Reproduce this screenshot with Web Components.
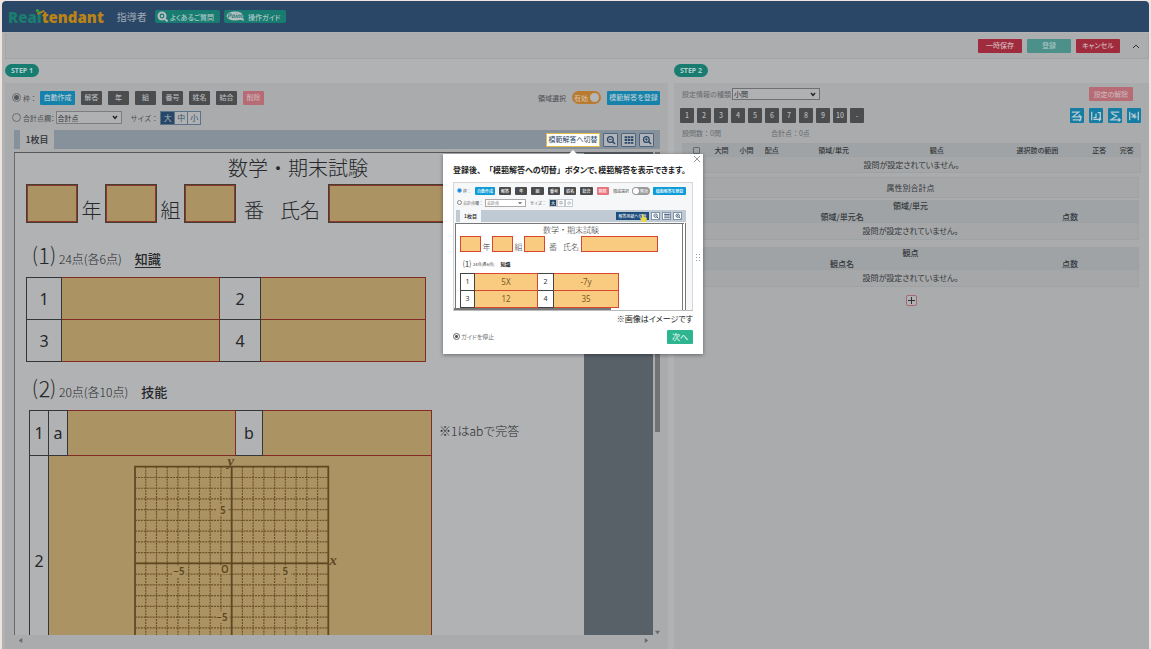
<!DOCTYPE html>
<html lang="ja">
<head>
<meta charset="utf-8">
<title>Realtendant 指導者</title>
<style>
html,body{margin:0;height:100%}
body{background:#efe3df;font-family:"Noto Sans CJK JP","Noto Sans",sans-serif;color:#2d3135;overflow:hidden}
</style>
</head>
<body>
<real-app></real-app>
<script>
const BASE = `
*{box-sizing:border-box}
button,input,select{font:inherit;color:inherit;margin:0}
button{cursor:pointer;padding:0;border:0;white-space:nowrap}
select{appearance:none;background:#b0b1b3 url("data:image/svg+xml,%3Csvg xmlns='http://www.w3.org/2000/svg' viewBox='0 0 6 5'%3E%3Cpath d='M1 1l2 2.500 2-2.500' fill='none' stroke='%23222' stroke-width='1.400'/%3E%3C/svg%3E") no-repeat right 3px center/6px 5px}
`;
function define(name, css, html) {
  const t = document.createElement('template');
  t.innerHTML = `<style>${BASE}${css}</style>${html}`;
  customElements.define(name, class extends HTMLElement {
    constructor() {
      super();
      this.attachShadow({mode: 'open'}).append(t.content.cloneNode(true));
    }
  });
}

/* Flat coloured button; the tone attribute selects its colour */
define('flat-button', `
:host{display:block;width:21px;height:14px;font-size:7px;--bg:#4b4c4e;--fg:#b6b7b9}
:host([tone=blue]){--bg:#1582ab;--fg:#b4c9d2}
:host([tone=pink]){--bg:#b66b75;--fg:#cdb1b5}
:host([tone=red]){--bg:#a02b3c;--fg:#d0b6ba}
:host([tone=teal]){--bg:#4b9089;--fg:#a8c4c1}
:host([size=mini]){width:13px;height:8px;font-size:4px;--bg:#4b4c4e;--fg:#fff}
:host([size=mini][tone=blue]){--bg:#0d9bd8}
:host([size=mini][tone=pink]){--bg:#e8737f}
button{display:block;width:100%;height:100%;border-radius:1px;background:var(--bg);color:var(--fg);font-weight:500;line-height:1;font-feature-settings:"palt"}
`, `<button type="button"><slot></slot></button>`);

const LENS = s => `<svg viewBox="0 0 16 16" aria-hidden="true"><circle cx="7" cy="7" r="4.6" fill="none" stroke="currentColor" stroke-width="2"/><path d="M10.4 10.4L14.5 14.5" stroke="currentColor" stroke-width="2.4"/><path d="${s}" stroke="currentColor" stroke-width="1.4"/></svg>`;
const GRID = `<svg viewBox="0 0 16 16" aria-hidden="true"><path fill="currentColor" d="M1 2h4v3H1zM6 2h4v3H6zM11 2h4v3h-4zM1 6.500h4v3H1zM6 6.500h4v3H6zM11 6.500h4v3h-4zM1 11h4v3H1zM6 11h4v3H6zM11 11h4v3h-4z"/></svg>`;
const ICONS = `
<button class="ic" type="button" aria-label="縮小">${LENS('M4.800 7h4.400')}</button>
<button class="ic" type="button" aria-label="一覧">${GRID}</button>
<button class="ic" type="button" aria-label="拡大">${LENS('M4.800 7h4.400M7 4.800v4.400')}</button>`;

define('app-header', `
:host{display:flex;align-items:center;height:31px;padding:0 6px;background:#2a4767;border-radius:4px 4px 0 0}
.logo{position:relative;font:800 15px/20px "Open Sans","Noto Sans",sans-serif;color:#1b7d70;text-decoration:none}
.logo b{font-weight:800;color:#b98317}
.logo svg{position:absolute;left:26px;top:1px;width:12px;height:7px}
.role{margin:0 8px 0 13px;font-size:10px;color:#a4adb6}
.help{display:flex;align-items:center;gap:2px;height:13px;margin-right:4px;padding:0 6px 0 2px;border-radius:2px;background:#187c71;color:#aac8c5;font-size:7px;font-weight:500;text-decoration:none;font-feature-settings:"palt"}
.help svg{height:11px}
`, `
<a class="logo" href="#home">Real<b>tendant</b><svg viewBox="0 0 14 8" aria-hidden="true"><circle cx="4" cy="3" r="2" fill="#3f9a3c"/><path d="M4 7L12 3" stroke="#b98317" stroke-width="2"/></svg></a>
<span class="role">指導者</span>
<a class="help" href="#faq"><svg viewBox="0 0 11 11" aria-hidden="true"><circle cx="5" cy="5" r="4.500" fill="#b4bcc0"/><path d="M8 8l2.500 2.500" stroke="#b4bcc0" stroke-width="2"/><circle cx="5" cy="5" r="1.800" fill="none" stroke="#187c71" stroke-width="1.200"/></svg>よくあるご質問</a>
<a class="help" href="#guide"><svg viewBox="0 0 20 11" aria-hidden="true"><ellipse cx="9" cy="5" rx="8.500" ry="4.500" fill="#b4bcc0"/><path d="M12 8l6 2-1-4z" fill="#b4bcc0"/><text x="9" y="7" text-anchor="middle" font-size="6" font-style="italic" font-weight="700" fill="#187c71">Point</text></svg>操作ガイド</a>`);

define('action-bar', `
:host{display:flex;align-items:center;justify-content:flex-end;gap:5px;height:26px;margin:1px 0 0 3px;padding:0 6px;background:#acadaf;border:1px solid #a2a4a6;border-top:0}
flat-button{width:44px;font-size:7px}
.fold{width:12px;height:12px;margin-left:5px;background:none}
.fold svg{display:block;width:8px;margin:auto}
`, `
<flat-button tone="red">一時保存</flat-button>
<flat-button tone="teal">登録</flat-button>
<flat-button tone="red">キャンセル</flat-button>
<button class="fold" type="button" aria-label="閉じる"><svg viewBox="0 0 8 6"><path d="M1 5l3-3 3 3" fill="none" stroke="#2d3135"/></svg></button>`);

/* One of the two numbered work areas */
define('step-panel', `
:host{display:flex;flex-direction:column;min-width:0;min-height:0}
.badge{align-self:flex-start;margin:5px 0 6px;padding:0 6px;border-radius:7px;background:#187c71;color:#b3cfcb;font:700 7px/13px "Noto Sans",sans-serif}
.body{flex:1;min-height:0;display:flex;flex-direction:column;background:#aaabad}
`, `<div class="badge"><slot name="badge"></slot></div><div class="body"><slot></slot></div>`);

define('answer-tools', `
:host{display:block;padding:7px 8px 0 7px;font-size:7px;color:#4a4d50}
.row{display:flex;align-items:center;height:15px}
.row+.row{margin-top:5px}
label{display:flex;align-items:center;gap:2px;white-space:nowrap}
input[type=radio]{appearance:none;width:9px;height:9px;border:1px solid #6b6d70;border-radius:50%}
input[type=radio]:checked{background:radial-gradient(circle,#55585b 0 2px,transparent 3px)}
.set{display:flex;gap:6px;margin-left:3px}
.end{display:flex;align-items:center;gap:6px;margin-left:auto}
.wide{width:35px}.reg{width:53px}
.toggle{display:flex;align-items:center;justify-content:space-between;width:29px;height:13px;padding:0 2px;border-radius:7px;background:#b87b2f;color:#d3bea2;font-weight:500}
.toggle input{appearance:none;width:9px;height:9px;border-radius:50%;background:#b5b6b8}
.sum{font-feature-settings:"palt"}
select{width:66px;height:13px;margin-left:1px;padding:0 1px;border:1px solid #7b7d80;border-radius:0;color:#303336}
.size{margin:0 2px 0 9px}
.seg{display:flex;height:14px;border:1px solid #5c7288}
.seg button{width:13px;background:#b0b1b3;color:#3d536b;border-left:1px solid #5c7288;font-size:8px;line-height:1}
.seg button:first-child{background:#284766;color:#aab5c0;border-left:0}
`, `
<div class="row">
<label><input type="radio" name="kind" checked>枠：</label>
<div class="set"><flat-button class="wide" tone="blue">自動作成</flat-button><flat-button>解答</flat-button><flat-button>年</flat-button><flat-button>組</flat-button><flat-button>番号</flat-button><flat-button>姓名</flat-button><flat-button>結合</flat-button><flat-button tone="pink">削除</flat-button></div>
<div class="end"><span>領域選択</span><label class="toggle">有効<input type="checkbox" checked></label><flat-button class="reg" tone="blue">模範解答を登録</flat-button></div>
</div>
<div class="row">
<label class="sum"><input type="radio" name="kind">合計点欄：</label>
<select aria-label="合計点欄"><option>合計点</option></select>
<span class="size">サイズ：</span>
<div class="seg"><button type="button">大</button><button type="button">中</button><button type="button">小</button></div>
</div>`);

define('sheet-tabs', `
:host{display:flex;align-items:center;height:19px;margin:5px 8px 0 9px;padding:0 6px;background:#87919b;font-size:7px}
.tab{align-self:stretch;width:34px;background:#acadaf;color:#2d3135;font-size:9px;font-weight:500}
.tools{display:flex;gap:3px;margin-left:auto}
.anchor{position:relative}
.switch{width:54px;height:14px;border:1px solid #e0bd4c;background:#fff;color:#2a4767;line-height:1;font-feature-settings:"palt"}
guide-popover{position:absolute;z-index:5;top:21px;left:50%;transform:translateX(-50%)}
.ic{width:15px;height:14px;border:1px solid #4c647d;border-radius:1px;background:#b0b3b7;color:#2a4767}
.ic svg{display:block;width:10px;height:10px;margin:auto}
`, `
<button class="tab" type="button">1枚目</button>
<div class="tools"><div class="anchor"><button class="switch" type="button">模範解答へ切替</button><guide-popover></guide-popover></div>${ICONS}</div>`);

const gridLines = (() => {
  let d = '';
  for (let i = 1; i < 18; i++) d += `M${i * 11} 0V198M0 ${i * 11}H198`;
  return d;
})();

/* The scanned exam page with its answer frames */
define('exam-sheet', `
:host{display:block;width:570px;flex:none;padding:0 0 0 11px;background:#b1b2b4;border-left:1px solid #66686b;color:#26282a;font-weight:300}
h1{margin:0 0 0 -14px;padding-top:1px;text-align:center;font-size:20px;line-height:27px;font-weight:300}
.frame{width:52px;height:39px;background:#ac9364;border:1px solid #443d38;outline:1px solid #8d3a2b;outline-offset:-2px}
.name{display:flex;align-items:flex-end;margin-top:3px;font-size:20px;line-height:27px}
.name span{width:27px;text-align:center;white-space:nowrap}
.name .no{width:36px}
.name .nm{width:56px}
.frame.long{width:193px}
h2{display:flex;align-items:baseline;margin:0;height:54px;padding-left:8px;font-weight:300;font-size:12px;line-height:62px}
h2.second{height:48px;line-height:50px}
h2 i{font-style:normal;font-size:22px;width:26px;margin-left:-1px}
h2 b{font-weight:500;font-size:13px;margin-left:13px}
h2 u{text-underline-offset:3px}
table{border-collapse:collapse;table-layout:fixed;font:400 16px/20px "Noto Sans",sans-serif}
th,td{padding:0;border:1px solid #34373a;text-align:center;font-weight:400}
td{background:#ac9364;border:1px solid #822b25}
tr.h42{height:42px}tr.h45{height:45px}tr.h210{height:210px}
.two{display:flex;align-items:flex-start;margin-left:3px}
.two p{margin:11px 0 0 7px;font-size:12px;line-height:20px}
td.plot{vertical-align:top}
svg{display:block;width:218px;height:206px;margin:0 0 0 86px;overflow:visible}
`, `
<h1>数学・期末試験</h1>
<div class="name"><div class="frame"></div><span>年</span><div class="frame"></div><span>組</span><div class="frame"></div><span class="no">番</span><span class="nm">氏名</span><div class="frame long"></div></div>
<h2><i>⑴</i>24点(各6点)<b><u>知識</u></b></h2>
<table><colgroup><col style="width:35px"><col style="width:158px"><col style="width:41px"><col style="width:165px"></colgroup>
<tr class="h42"><th>1</th><td></td><th>2</th><td></td></tr>
<tr class="h42"><th>3</th><td></td><th>4</th><td></td></tr></table>
<h2 class="second"><i>⑵</i>20点(各10点)<b>技能</b></h2>
<div class="two">
<table><colgroup><col style="width:19px"><col style="width:19px"><col style="width:168px"><col style="width:27px"><col style="width:169px"></colgroup>
<tr class="h45"><th>1</th><th>a</th><td></td><th>b</th><td></td></tr>
<tr class="h210"><th>2</th><td class="plot" colspan="4">
<svg viewBox="0 -11 223 211" font-family="Noto Sans" fill="#5f4820" preserveAspectRatio="xMinYMin meet">
<path d="${gridLines}" stroke="#6a5025" stroke-width="1.200" stroke-dasharray="2 1" fill="none"/>
<path d="M0 0H198V198H0ZM99 0V198M0 99H198" stroke="#5f4820" stroke-width="1.800" fill="none"/>
<g fill="#ac9364"><rect x="84" y="38" width="11" height="12"/><rect x="86" y="101" width="11" height="9"/><rect x="38" y="102" width="14" height="11"/><rect x="149" y="102" width="11" height="11"/><rect x="84" y="148" width="13" height="12"/></g>
<text x="98" y="-1" text-anchor="middle" font-size="15" font-weight="700" font-style="italic" font-family="Liberation Serif">y</text>
<text x="203" y="101" text-anchor="middle" font-size="15" font-weight="700" font-style="italic" font-family="Liberation Serif">x</text>
<g font-size="10" font-weight="600" text-anchor="middle"><text x="90" y="48">5</text><text x="92" y="109">O</text><text x="45" y="111">−5</text><text x="154" y="111">5</text><text x="89" y="158">−5</text></g>
</svg></td></tr></table>
<p>※1はabで完答</p></div>`);

define('sheet-viewer', `
:host{flex:1;min-height:0;display:grid;grid-template:minmax(0,1fr) 10px / minmax(0,1fr) 8px;margin:3px 7px 4px 9px}
.view{display:flex;overflow:hidden;background:#586068;border-top:1px solid #55575a}
.v{display:flex;flex-direction:column;justify-content:space-between;align-items:center}
.v i{width:5px;height:280px;background:#727375}
.h{display:flex;justify-content:space-between;align-items:center;padding:0 4px}
svg{width:5px;height:5px;fill:#66686b}
`, `
<div class="view"><exam-sheet></exam-sheet></div>
<div class="v"><i></i><svg viewBox="0 0 6 6"><path d="M0 1h6L3 5z"/></svg></div>
<div class="h"><svg viewBox="0 0 6 6"><path d="M5 0v6L1 3z"/></svg><svg viewBox="0 0 6 6"><path d="M1 0v6l4-3z"/></svg></div>`);

/* Small picture of the editor shown inside the guide */
define('guide-preview', `
:host{display:block;height:129px;overflow:hidden;border:1px solid #d4d6d9;border-bottom-color:#bbb;background:#f6f7f8;font-size:4px;line-height:8px;color:#555;position:relative;font-feature-settings:normal}
.row{display:flex;align-items:center;gap:4px;height:8px;margin:4px 6px 0 3px;white-space:nowrap}
.row.b{gap:2px}
label{display:flex;align-items:center;gap:1px}
input[type=radio]{appearance:none;width:5px;height:5px;border:1px solid #888;border-radius:50%}
input[type=radio]:checked{background:#0d86e0;border-color:#7fbdf0}
.wide{width:21px}.reg{width:33px}
.end{display:flex;align-items:center;gap:3px;margin-left:auto}
.toggle{width:18px;height:8px;padding:0 1px;border-radius:4px;background:#9a9a9a;color:#fff}
.toggle input{appearance:none;width:6px;height:6px;border-radius:50%;background:#fff}
select{width:41px;height:8px;padding:0 1px;border:1px solid #aaa;border-radius:0;background-color:#fff;background-size:4px 4px;font-size:4px;line-height:6px}
.size{margin:0 1px 0 2px}
.seg{display:flex}
.seg button{width:8px;height:8px;border:1px solid #c3cad2;background:#fff;line-height:1}
.seg button:first-child{background:#284766;color:#fff}
.tabs{display:flex;align-items:center;gap:2px;height:12px;margin:3px 6px 0 2px;padding:0 4px;background:#c0cad5}
.tab{align-self:stretch;width:21px;background:#f6f7f8;color:#222;font-size:5px;font-weight:500}
.switch{position:relative;width:33px;height:8px;margin-left:auto;background:#1d4c7c;color:#fff;line-height:1}
.switch svg{position:absolute;right:2px;top:2px;width:7px;height:8px}
.ic{width:9px;height:8px;border:1px solid #8195aa;background:#fff;color:#2a4767}
.ic svg{display:block;width:6px;height:6px;margin:auto}
.paper{height:88px;margin:1px 6px 0 1px;padding-left:4px;background:#fff;border:1px solid #777;border-right:4px double #777;color:#333}
.t{text-align:center;font-size:8px;line-height:12px;font-weight:300}
.name{display:flex;align-items:flex-end;font-size:8px;line-height:11px;font-weight:300}
.name i{width:21px;height:16px;background:#f9cb80;border:1px solid #d8472f}
.name i.long{width:77px}
.name span{width:11px;text-align:center;white-space:nowrap}
.name .no{width:16px}.name .nm{width:20px}
.q{display:flex;align-items:center;gap:2px;height:21px;padding:3px 0 0 3px}
.q span{font-size:8px}.q b{margin-left:4px;font-size:5px;color:#222}
table{border-collapse:collapse;table-layout:fixed;font:400 8px/10px "Noto Sans",sans-serif}
tr{height:17px}
th,td{padding:0;border:1px solid #444;text-align:center;font-weight:400}
th{font-size:7px}
td{background:#f9cb80;border-color:#d8472f;color:#7a5a25}
.bar{position:absolute;left:0;bottom:0;width:157px;height:2px;background:#777}
`, `
<div class="row"><label><input type="radio" name="k" checked>枠：</label>
<flat-button size="mini" class="wide" tone="blue">自動作成</flat-button><flat-button size="mini">解答</flat-button><flat-button size="mini">年</flat-button><flat-button size="mini">組</flat-button><flat-button size="mini">番号</flat-button><flat-button size="mini">姓名</flat-button><flat-button size="mini">結合</flat-button><flat-button size="mini" tone="pink">削除</flat-button>
<div class="end"><span>領域選択</span><label class="toggle"><input type="checkbox">無効</label><flat-button size="mini" class="reg" tone="blue">模範解答を登録</flat-button></div></div>
<div class="row b"><label><input type="radio" name="k">合計点欄：</label><select aria-label="合計点欄"><option>合計点</option></select><span class="size">サイズ：</span><div class="seg"><button type="button">大</button><button type="button">中</button><button type="button">小</button></div></div>
<div class="tabs"><button class="tab" type="button">1枚目</button><button class="switch" type="button">解答用紙へ切替<svg viewBox="0 0 7 8" aria-hidden="true"><path d="M2 8L0 4l2 0V0h1l1 3 3 1-1 4z" fill="#e8d84a"/></svg></button>${ICONS}</div>
<div class="paper"><div class="t">数学・期末試験</div>
<div class="name"><i></i><span>年</span><i></i><span>組</span><i></i><span class="no">番</span><span class="nm">氏名</span><i class="long"></i></div>
<div class="q"><span>⑴</span>24点(各6点)<b>知識</b></div>
<table><colgroup><col style="width:14px"><col style="width:63px"><col style="width:16px"><col style="width:65px"></colgroup>
<tr><th>1</th><td>5X</td><th>2</th><td>-7y</td></tr><tr><th>3</th><td>12</td><th>4</th><td>35</td></tr></table></div>
<div class="bar"></div>`);

define('guide-popover', `
:host{display:block;width:260px;padding:9px 10px 10px;background:#fff;box-shadow:0 1px 4px #0006;color:#222;font-feature-settings:"palt"}
:host::before{content:"";position:absolute;top:-4px;left:50%;margin-left:-4px;border:4px solid transparent;border-top:0;border-bottom-color:#fff}
h3{margin:0 0 5px;font-size:8px;line-height:14px;font-weight:700;white-space:nowrap}
h3 span{font-feature-settings:normal}
p{margin:1px 0 4px;text-align:right;font-size:8px;line-height:14px}
.foot{display:flex;align-items:center;justify-content:space-between;height:14px}
label{display:flex;align-items:center;gap:1px;font-size:6px;color:#777}
input{appearance:none;width:7px;height:7px;border:1px solid #666;border-radius:50%;background:radial-gradient(circle,#555 0 1px,transparent 2px)}
.next{width:26px;height:14px;border-radius:1px;background:#2fb690;color:#fff;font-size:8px;line-height:1}
.x{position:absolute;top:1px;right:2px;width:8px;height:8px;background:none}
.x svg,.grip{display:block}
.grip{position:absolute;right:3px;top:100px;width:4px;height:8px}
`, `
<button class="x" type="button" aria-label="閉じる"><svg viewBox="0 0 8 8"><path d="M1 1l6 6M7 1L1 7" stroke="#999"/></svg></button>
<h3>登録後<span>、「</span>模範解答への切替<span>」</span>ボタンで、模範解答を表示できます。</h3>
<guide-preview></guide-preview>
<p>※画像はイメージです</p>
<div class="foot"><label><input type="radio">ガイドを停止</label><button class="next" type="button">次へ</button></div>
<svg class="grip" viewBox="0 0 4 8"><path d="M0 0h1v1H0zM3 0h1v1H3zM0 3h1v1H0zM3 3h1v1H3zM0 6h1v1H0zM3 6h1v1H3z" fill="#999"/></svg>`);

const num = [1,2,3,4,5,6,7,8,9,10,'-'].map(n => `<flat-button>${n}</flat-button>`).join('');
const sort = (d, label) => `<button type="button" aria-label="${label}"><svg viewBox="0 0 14 14" fill="none" stroke="#b9ccd4" stroke-width="1.500">${d}</svg></button>`;

define('question-tools', `
:host{display:block;padding:4px 8px 0 6px;font-size:7px;color:#66696c}
.row{display:flex;align-items:center;justify-content:space-between}
label{display:flex;align-items:center;gap:1px;margin-left:2px}
select{width:88px;height:12px;padding:0 1px;border:1px solid #6d6f72;border-radius:0;color:#303336}
.clear{width:44px;margin-right:8px}
.nums{display:flex;gap:3px}
.nums flat-button{width:14px;height:15px}
.row.b{margin-top:7px}
.sort{display:flex;gap:5px}
.sort button{width:14px;height:15px;border-radius:1px;background:#157da4}
.sort svg{display:block;width:12px;height:12px;margin:auto}
.sum{display:flex;gap:50px;margin:4px 2px 0;line-height:12px}
`, `
<div class="row"><label>設定情報の種類<select><option>小問</option></select></label><flat-button class="clear" tone="pink">設定の解除</flat-button></div>
<div class="row b"><div class="nums">${num}</div>
<div class="sort">${sort('<path d="M1 2.500H9L2 8H12M2 11.500H12M9 5.500L12 8L10 13"/>','小問順')}${sort('<path d="M2 2V12M4 9H7V4M9 3H12V11M4 11H13M11 9V13"/>','横順')}${sort('<path d="M2 2.500H12M3 4L9 7L3 11M1 11.500H12M11 9.500L13 11.500L11 13.500"/>','合計')}${sort('<path d="M2 2V12M12 2V12M4 8H10M4 4L7 7M8 4V10"/>','縦順')}</div></div>
<div class="sum"><span>設問数：0問</span><span>合計点：0点</span></div>`);

define('question-tables', `
:host{display:block;margin:4px 8px 0;font-size:8px;line-height:10px;color:#34373a;font-feature-settings:"palt"}
table{width:100%;border-collapse:collapse;table-layout:fixed;background:#a5a7a9}
th,td{padding:0;border:1px solid #9fa2a4;text-align:center;font-weight:500;white-space:nowrap}
th{background:#9fa3a6;height:11px}
td{height:17px;font-weight:400}
.list th{height:13px;font-size:7px}
.list td{height:16px}
input{appearance:none;display:block;width:7px;height:7px;margin:auto;border:1px solid #66696c;border-radius:1px}
.sect{margin-right:2px}
.title{height:21px;margin:4px 2px 2px 0;border:1px solid #9fa2a4;background:#a5a7a9;text-align:center;line-height:20px}
.sect+.sect{margin-top:7px}
.add{display:block;width:11px;height:11px;margin:8px auto 0;border:1px solid #a5686c;border-radius:2px;background:#b0b1b3;color:#2d3135}
.add svg{display:block;width:9px;height:9px}
`, `
<table class="list"><colgroup><col style="width:6%"><col style="width:5%"><col style="width:6%"><col style="width:5%"><col style="width:22%"><col style="width:23%"><col style="width:21%"><col style="width:6%"><col style="width:6%"></colgroup>
<thead><tr><th><input type="checkbox" aria-label="すべて選択"></th><th>大問</th><th>小問</th><th>配点</th><th>領域/単元</th><th>観点</th><th>選択肢の範囲</th><th>正答</th><th>完答</th></tr></thead>
<tbody><tr><td colspan="9">設問が設定されていません。</td></tr></tbody></table>
<div class="title">属性別合計点</div>
<div class="sect"><table><colgroup><col style="width:70%"><col></colgroup><tr><th colspan="2">領域/単元</th></tr><tr><th>領域/単元名</th><th>点数</th></tr><tr><td colspan="2">設問が設定されていません。</td></tr></table></div>
<div class="sect"><table><colgroup><col style="width:70%"><col></colgroup><tr><th colspan="2">観点</th></tr><tr><th>観点名</th><th>点数</th></tr><tr><td colspan="2">設問が設定されていません。</td></tr></table></div>
<button class="add" type="button" aria-label="追加"><svg viewBox="0 0 9 9"><path d="M4.500 1v7M1 4.500h7" stroke="currentColor"/></svg></button>`);

define('real-app', `
:host{display:flex;flex-direction:column;height:calc(100vh - 1px);margin:1px 2px 0;border-radius:4px 4px 0 0;background:#b1b2b4;overflow:hidden}
main{flex:1;min-height:0;display:grid;grid-template-columns:663fr 475fr;gap:6px;padding-left:3px}
`, `
<app-header></app-header>
<action-bar></action-bar>
<main>
<step-panel><span slot="badge">STEP 1</span><answer-tools></answer-tools><sheet-tabs></sheet-tabs><sheet-viewer></sheet-viewer></step-panel>
<step-panel><span slot="badge">STEP 2</span><question-tools></question-tools><question-tables></question-tables></step-panel>
</main>`);
</script>
</body>
</html>
